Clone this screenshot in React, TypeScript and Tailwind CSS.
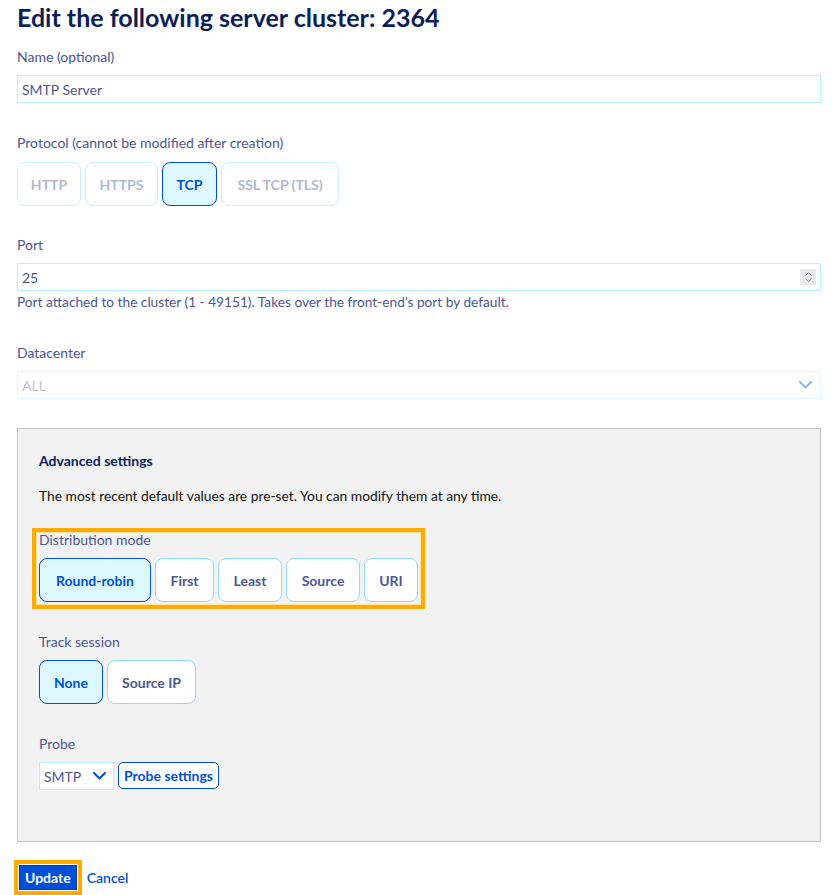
import React from "react";

const FONT = "font-['Lato','Liberation_Sans',sans-serif]";

function Label({ children, className = "" }: { children: React.ReactNode; className?: string }) {
  return <div className={`text-[14px] leading-[20px] text-[#4d5693] ${className}`}>{children}</div>;
}

type BtnState = "active" | "idle" | "disabled";

function ToggleBtn({ children, state, w }: { children: React.ReactNode; state: BtnState; w: string }) {
  const base = "h-[44px] rounded-lg border flex items-center justify-center text-[14px] font-bold shrink-0";
  const styles: Record<BtnState, string> = {
    active: "bg-[#def8ff] border-[#0050d7] text-[#0050d7]",
    idle: "bg-white border-[#8fdcfb] text-[#4d5693]",
    disabled: "bg-white border-[#c7f1fd] text-[#b3b8d2]",
  };
  return <div className={`${base} ${styles[state]} ${w}`}>{children}</div>;
}

function Chevron({ color, w = 13 }: { color: string; w?: number }) {
  return (
    <svg width={w} height={8} viewBox="0 0 13 8" fill="none">
      <polyline points="1,1 6.5,6.5 12,1" stroke={color} strokeWidth="2" strokeLinecap="round" strokeLinejoin="round" />
    </svg>
  );
}

export default function App() {
  return (
    <div className={`min-h-screen bg-white pl-[17px] pr-[15px] ${FONT}`}>
      <h1 className="text-[25px] leading-[34px] font-bold text-[#0b1e5a]">
        Edit the following server cluster: 2364
      </h1>

      <div className="mt-[13px]">
        <Label>Name (optional)</Label>
        <div className="mt-[8px] h-[28px] border border-[#bdf0fe] bg-white flex items-center px-[4px]">
          <span className="text-[14px] text-[#4d5693]">SMTP Server</span>
        </div>
      </div>

      <div className="mt-[30px]">
        <Label>Protocol (cannot be modified after creation)</Label>
        <div className="mt-[9px] flex gap-[4px]">
          <ToggleBtn state="disabled" w="w-[64px]">HTTP</ToggleBtn>
          <ToggleBtn state="disabled" w="w-[73px]">HTTPS</ToggleBtn>
          <ToggleBtn state="active" w="w-[55px]">TCP</ToggleBtn>
          <ToggleBtn state="disabled" w="w-[118px]">SSL TCP (TLS)</ToggleBtn>
        </div>
      </div>

      <div className="mt-[29px]">
        <Label>Port</Label>
        <div className="mt-[8px] h-[28px] border border-[#bdf0fe] bg-white flex items-center pl-[4px] pr-[4px]">
          <span className="flex-1 text-[14px] text-[#4d5693]">25</span>
          <span className="w-[16px] h-[16px] bg-[#e9e9ed] flex flex-col items-center justify-center gap-[2px]">
            <svg width="7" height="4" viewBox="0 0 7 4" fill="none">
              <polyline points="0.5,3.5 3.5,0.5 6.5,3.5" stroke="#8a8a95" strokeWidth="1" />
            </svg>
            <svg width="7" height="4" viewBox="0 0 7 4" fill="none">
              <polyline points="0.5,0.5 3.5,3.5 6.5,0.5" stroke="#8a8a95" strokeWidth="1" />
            </svg>
          </span>
        </div>
        <div className="mt-[1px] text-[13.7px] leading-[20px] text-[#4d5693]">
          Port attached to the cluster (1 - 49151). Takes over the front-end’s port by default.
        </div>
      </div>

      <div className="mt-[31px]">
        <Label>Datacenter</Label>
        <div className="mt-[8px] h-[28px] border border-[#dff7fe] bg-white flex items-center pl-[4px] pr-[8px]">
          <span className="flex-1 text-[14px] text-[#c2c6da]">ALL</span>
          <Chevron color="#8db2f1" />
        </div>
      </div>

      <div className="mt-[29px] border border-[#c4c4c4] bg-[#f2f2f2] pl-[21px] pr-[21px] pt-[22px] pb-[51px]">
        <div className="text-[14px] leading-[20px] font-bold text-[#0b1e5a]">Advanced settings</div>
        <div className="mt-[15px] text-[13.8px] leading-[20px] text-[#111111]">
          The most recent default values are pre-set. You can modify them at any time.
        </div>

        <div className="relative mt-[24px] w-fit">
          <Label>Distribution mode</Label>
          <div className="mt-[8px] flex gap-[4px]">
            <ToggleBtn state="active" w="w-[112px]">Round-robin</ToggleBtn>
            <ToggleBtn state="idle" w="w-[59px]">First</ToggleBtn>
            <ToggleBtn state="idle" w="w-[64px]">Least</ToggleBtn>
            <ToggleBtn state="idle" w="w-[74px]">Source</ToggleBtn>
            <ToggleBtn state="idle" w="w-[54px]">URI</ToggleBtn>
          </div>
          <div className="pointer-events-none absolute -top-[2px] -left-[7px] -right-[7px] -bottom-[7px] border-[4px] border-[#ffab00] shadow-[inset_0_0_0_1px_#fde3a6]" />
        </div>

        <div className="mt-[30px]">
          <Label>Track session</Label>
          <div className="mt-[8px] flex gap-[4px]">
            <ToggleBtn state="active" w="w-[64px]">None</ToggleBtn>
            <ToggleBtn state="idle" w="w-[89px]">Source IP</ToggleBtn>
          </div>
        </div>

        <div className="mt-[30px]">
          <Label>Probe</Label>
          <div className="mt-[8px] flex items-start gap-[4px]">
            <div className="w-[75px] h-[28px] bg-white border border-[#bdf0fe] flex items-center pl-[4px] pr-[7px]">
              <span className="flex-1 text-[14px] text-[#4d5693]">SMTP</span>
              <Chevron color="#0050d7" />
            </div>
            <button className="h-[27px] px-[5px] rounded-[5px] border border-[#0050d7] bg-white text-[14px] font-bold text-[#0050d7] flex items-center">
              Probe settings
            </button>
          </div>
        </div>
      </div>

      <div className="mt-[23px] flex items-center gap-[10px] pl-[2px]">
        <button className="h-[25px] px-[5px] bg-[#0050d7] border border-[#003ea8] text-white text-[14px] font-bold flex items-center outline outline-[4px] outline-[#ffab00] outline-offset-[1px]">
          Update
        </button>
        <span className="text-[14px] font-semibold text-[#0050d7]">Cancel</span>
      </div>
    </div>
  );
}
